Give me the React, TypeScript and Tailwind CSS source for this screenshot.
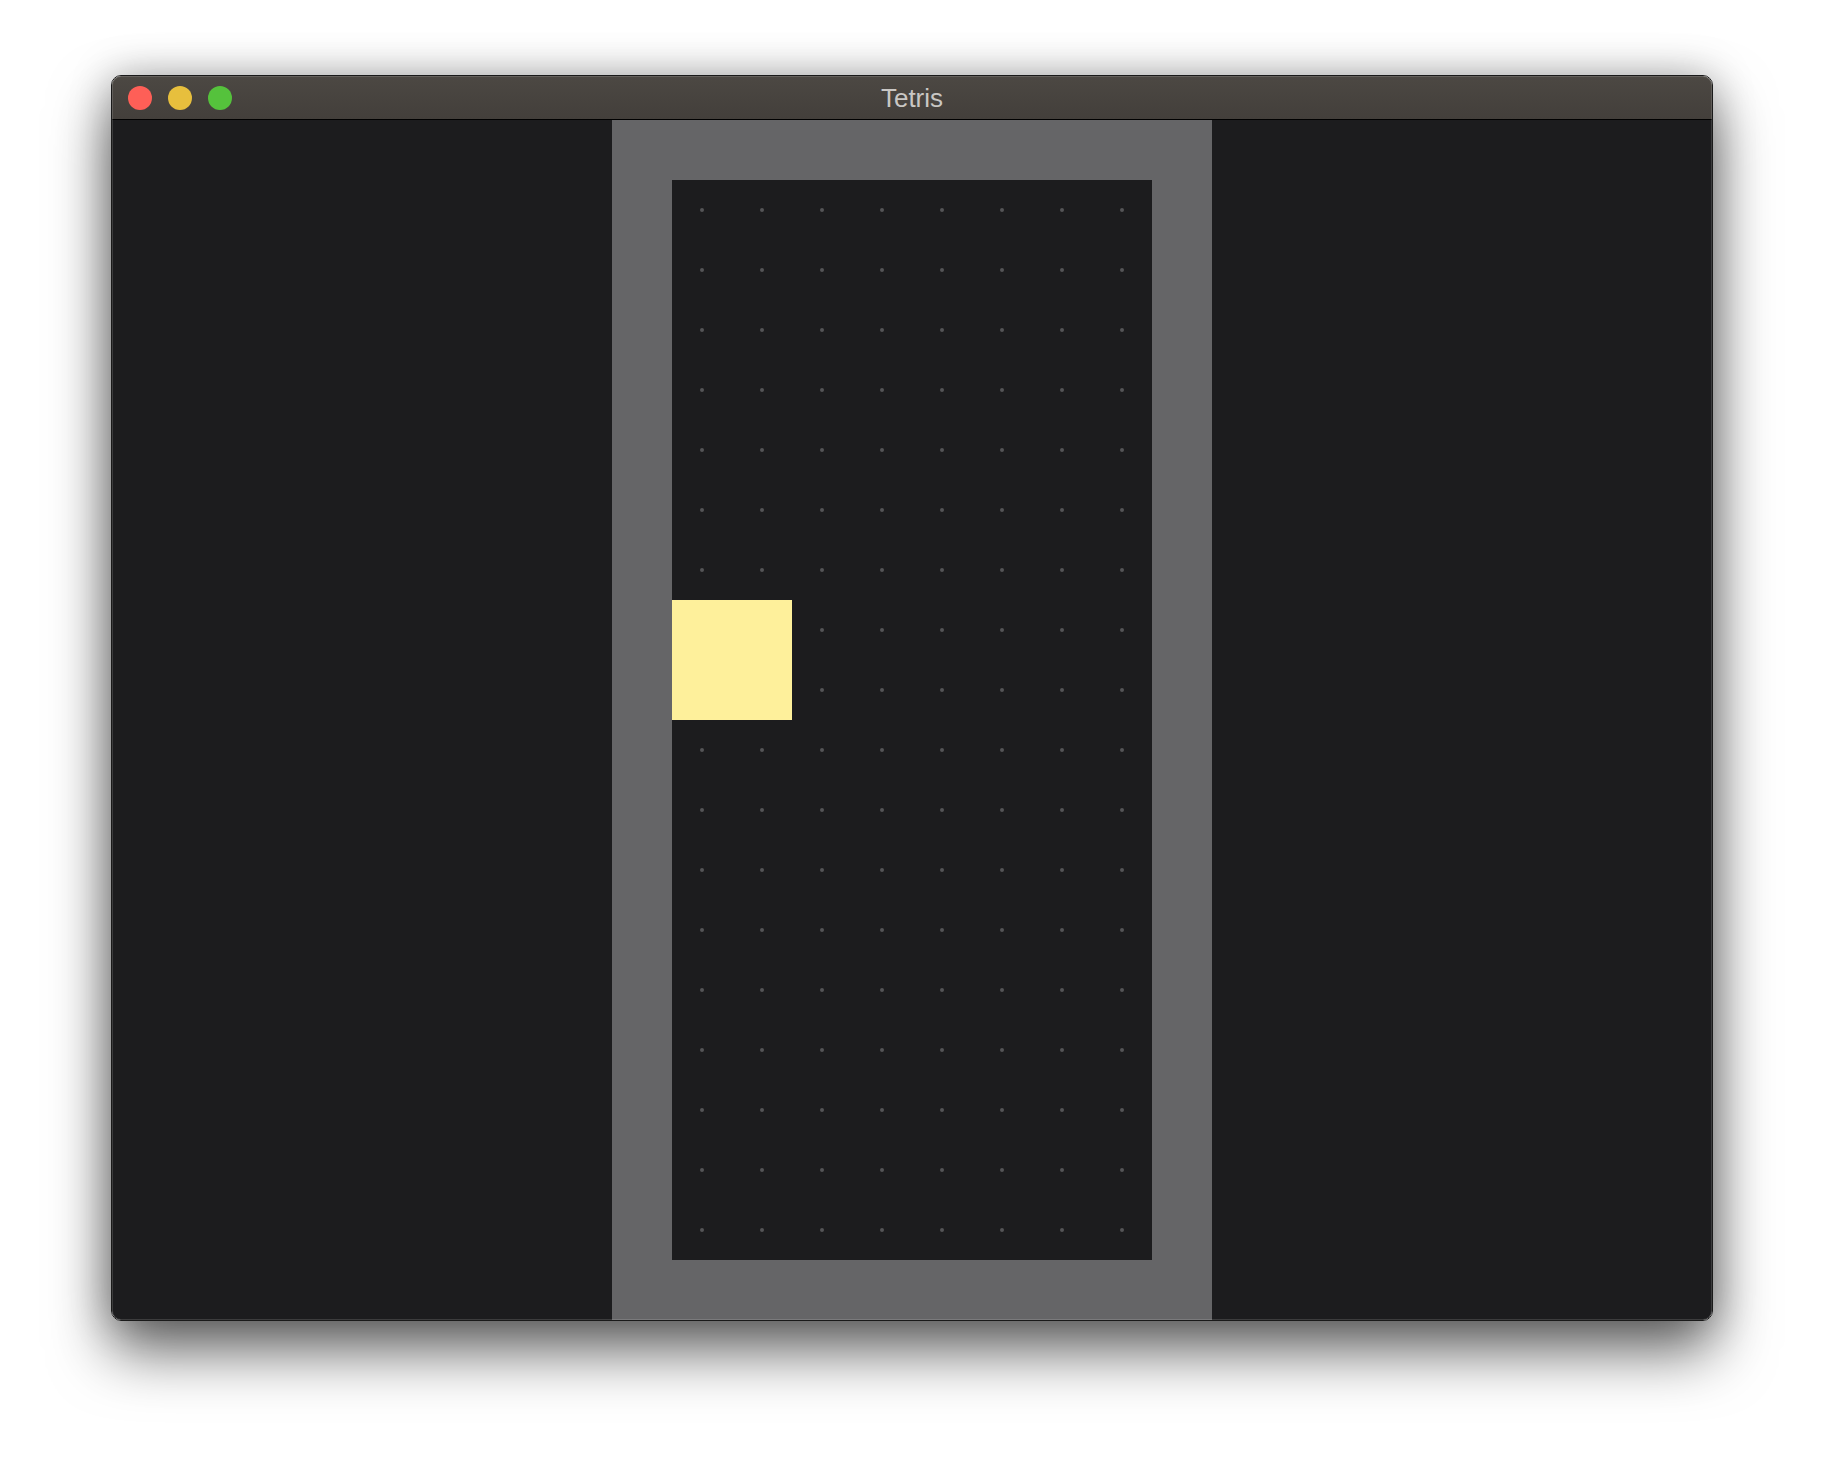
import React from 'react';

const COLS = 8;
const ROWS = 18;

// the falling O piece, as [row, col]
const PIECE: Array<[number, number]> = [
  [7, 0], [7, 1],
  [8, 0], [8, 1],
];

const isFilled = (r: number, c: number) => PIECE.some(([pr, pc]) => pr === r && pc === c);

const TrafficLights: React.FC = () => (
  <div className="flex items-center gap-4 pl-4">
    <span className="w-6 h-6 rounded-full bg-[#fe5f57]" />
    <span className="w-6 h-6 rounded-full bg-[#e7bf3d]" />
    <span className="w-6 h-6 rounded-full bg-[#55c23c]" />
  </div>
);

const Well: React.FC = () => {
  const cells = [];
  for (let r = 0; r < ROWS; r++) {
    for (let c = 0; c < COLS; c++) {
      cells.push(
        isFilled(r, c) ? (
          <div key={`${r}-${c}`} className="bg-[#fef09b]" />
        ) : (
          <div key={`${r}-${c}`} className="flex items-center justify-center">
            <span className="w-1 h-1 rounded-full bg-[#545457]" />
          </div>
        )
      );
    }
  }
  return (
    <div className="grid grid-cols-[repeat(8,60px)] grid-rows-[repeat(18,60px)] bg-[#1c1c1e]">
      {cells}
    </div>
  );
};

export default function App() {
  return (
    <div className="w-full h-[1468px] bg-white pt-[75px] pl-[111px] font-['Liberation_Sans',Arial,sans-serif]">
      <div className="relative w-[1602px] border border-[#1a1a1a] rounded-[10px] overflow-hidden shadow-[0_30px_60px_rgba(0,0,0,0.6),0_0_40px_rgba(0,0,0,0.25)]">
        {/* Title bar */}
        <div className="relative h-[44px] flex items-center border-b border-black bg-gradient-to-b from-[#4c4843] to-[#433f3b]">
          <TrafficLights />
          <div className="absolute inset-0 flex items-center justify-center text-[26px] leading-none text-[#c9c7c4]">
            Tetris
          </div>
        </div>

        {/* Content */}
        <div className="h-[1200px] flex justify-center bg-[#1c1c1e]">
          <div className="p-[60px] bg-[#656567]">
            <Well />
          </div>
        </div>

        {/* inner edge highlight */}
        <div className="pointer-events-none absolute inset-0 rounded-[9px] shadow-[inset_0_0_0_1px_rgba(255,255,255,0.14)]" />
      </div>
    </div>
  );
}
